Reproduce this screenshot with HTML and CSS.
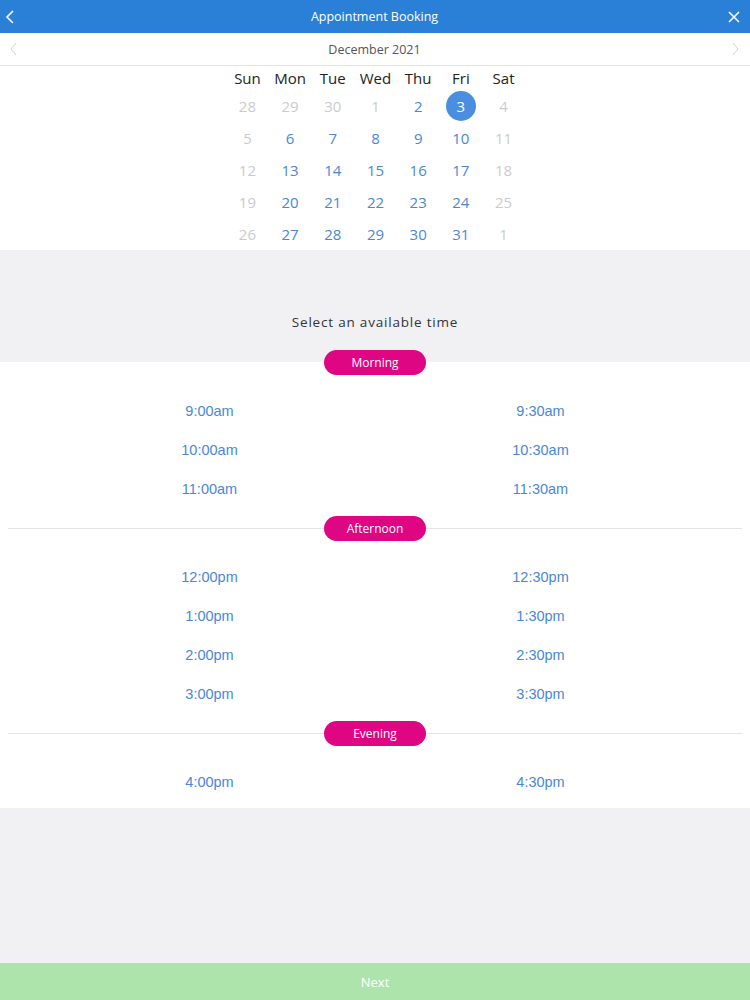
FILE: index.html
```html
<!DOCTYPE html>
<html lang="en">
<head>
    <meta charset="UTF-8">
    <meta name="viewport" content="width=device-width, initial-scale=1.0">
    <title>Appointment Booking</title>
    <link rel="stylesheet" href="styles.css">
</head>
<body>
    <!-- Top bar -->
    <header class="topbar">
        <svg class="topbar-icon" width="12" height="16" viewBox="0 0 12 16">
            <path d="M9 2 L3 8 L9 14" fill="none" stroke="white" stroke-width="1.6"/>
        </svg>
        <div class="topbar-title">Appointment Booking</div>
        <svg class="topbar-icon close" width="14" height="14" viewBox="0 0 14 14">
            <path d="M2 2 L12 12 M12 2 L2 12" fill="none" stroke="white" stroke-width="1.6"/>
        </svg>
    </header>

    <!-- Month switcher -->
    <div class="monthbar">
        <svg width="10" height="14" viewBox="0 0 10 14">
            <path d="M7 1 L2 7 L7 13" fill="none" stroke="#d4d4d8" stroke-width="1"/>
        </svg>
        <div class="month-title">December 2021</div>
        <svg width="10" height="14" viewBox="0 0 10 14">
            <path d="M3 1 L8 7 L3 13" fill="none" stroke="#d4d4d8" stroke-width="1"/>
        </svg>
    </div>

    <!-- Calendar grid -->
    <div class="calendar">
        <div class="cal-grid">
            <div class="weekday">Sun</div>
            <div class="weekday">Mon</div>
            <div class="weekday">Tue</div>
            <div class="weekday">Wed</div>
            <div class="weekday">Thu</div>
            <div class="weekday">Fri</div>
            <div class="weekday">Sat</div>

            <div class="day off">28</div>
            <div class="day off">29</div>
            <div class="day off">30</div>
            <div class="day off">1</div>
            <div class="day">2</div>
            <div class="day"><span class="selected">3</span></div>
            <div class="day off">4</div>

            <div class="day off">5</div>
            <div class="day">6</div>
            <div class="day">7</div>
            <div class="day">8</div>
            <div class="day">9</div>
            <div class="day">10</div>
            <div class="day off">11</div>

            <div class="day off">12</div>
            <div class="day">13</div>
            <div class="day">14</div>
            <div class="day">15</div>
            <div class="day">16</div>
            <div class="day">17</div>
            <div class="day off">18</div>

            <div class="day off">19</div>
            <div class="day">20</div>
            <div class="day">21</div>
            <div class="day">22</div>
            <div class="day">23</div>
            <div class="day">24</div>
            <div class="day off">25</div>

            <div class="day off">26</div>
            <div class="day">27</div>
            <div class="day">28</div>
            <div class="day">29</div>
            <div class="day">30</div>
            <div class="day">31</div>
            <div class="day off">1</div>
        </div>
    </div>

    <div class="time-heading">Select an available time</div>

    <!-- Time slots -->
    <div class="slots">
        <div class="slot-group">
            <div class="divider first">
                <span class="pill">Morning</span>
            </div>
            <div class="slot-grid">
                <div class="slot">9:00am</div>
                <div class="slot">9:30am</div>
                <div class="slot">10:00am</div>
                <div class="slot">10:30am</div>
                <div class="slot">11:00am</div>
                <div class="slot">11:30am</div>
            </div>
        </div>

        <div class="slot-group">
            <div class="divider">
                <span class="line"></span>
                <span class="pill">Afternoon</span>
                <span class="line"></span>
            </div>
            <div class="slot-grid">
                <div class="slot">12:00pm</div>
                <div class="slot">12:30pm</div>
                <div class="slot">1:00pm</div>
                <div class="slot">1:30pm</div>
                <div class="slot">2:00pm</div>
                <div class="slot">2:30pm</div>
                <div class="slot">3:00pm</div>
                <div class="slot">3:30pm</div>
            </div>
        </div>

        <div class="slot-group last">
            <div class="divider">
                <span class="line"></span>
                <span class="pill">Evening</span>
                <span class="line"></span>
            </div>
            <div class="slot-grid">
                <div class="slot">4:00pm</div>
                <div class="slot">4:30pm</div>
            </div>
        </div>
    </div>

    <div class="spacer"></div>

    <div class="next-btn">Next</div>
</body>
</html>
```

FILE: styles.css
```css
html, body {
    margin: 0;
    padding: 0;
    height: 100%;
}

body {
    display: flex;
    flex-direction: column;
    background-color: #f1f1f3;
    font-family: "Open Sans", "Noto Sans", sans-serif;
    overflow: hidden;
}

/* top bar */
.topbar {
    height: 33px;
    flex-shrink: 0;
    background-color: #2a7fd6;
    display: grid;
    grid-template-columns: 1fr auto 1fr;
    align-items: center;
    padding: 0 9px 0 4px;
}

.topbar-title {
    color: white;
    font-size: 12.5px;
    margin-left: 4px;
}

.topbar-icon {
    display: block;
}

.topbar-icon.close {
    justify-self: end;
}

/* month */
.monthbar {
    height: 32px;
    flex-shrink: 0;
    background-color: white;
    border-bottom: 1px solid #e2e2e6;
    display: flex;
    align-items: center;
    justify-content: space-between;
    padding: 0 10px 0 9px;
}

.month-title {
    color: #555;
    font-size: 12.5px;
}

/* calendar */
.calendar {
    background-color: white;
    height: 184px;
    flex-shrink: 0;
    display: flex;
    justify-content: center;
}

.cal-grid {
    display: grid;
    grid-template-columns: repeat(7, 42.7px);
    grid-template-rows: 24px repeat(5, 32px);
    margin-left: 1px;
}

.weekday {
    text-align: center;
    font-size: 15px;
    color: #222;
    line-height: 24px;
}

.day {
    display: flex;
    align-items: center;
    justify-content: center;
    font-size: 15px;
    color: #4a87d9;
}

.day.off {
    color: #cbcbcf;
}

.selected {
    width: 30px;
    height: 30px;
    border-radius: 50%;
    background-color: #4a8ee0;
    color: white;
    display: flex;
    align-items: center;
    justify-content: center;
}

/* time heading */
.time-heading {
    flex-shrink: 0;
    height: 112px;
    box-sizing: border-box;
    padding-top: 62px;
    text-align: center;
    font-size: 13.5px;
    letter-spacing: 0.8px;
    line-height: 20px;
    color: #333;
}

/* slots */
.slots {
    flex-shrink: 0;
    background-color: white;
    display: flex;
    flex-direction: column;
    padding-bottom: 6px;
}

.slot-group {
    display: flex;
    flex-direction: column;
    padding-bottom: 7px;
}

.slot-group.last {
    padding-bottom: 0;
}

.divider {
    height: 25px;
    display: flex;
    align-items: center;
    justify-content: center;
    padding: 0 8px;
    margin-bottom: 17px;
}

.divider.first {
    margin-top: -12.5px;
}

.line {
    flex: 1;
    height: 1px;
    background-color: #e4e4e8;
}

.pill {
    width: 102px;
    height: 25px;
    border-radius: 13px;
    background-color: #de0682;
    color: white;
    font-size: 12px;
    display: flex;
    align-items: center;
    justify-content: center;
}

.slot-grid {
    display: grid;
    grid-template-columns: 1fr 1fr;
    grid-auto-rows: 39px;
    padding: 0 44px;
}

.slot {
    display: flex;
    align-items: center;
    justify-content: center;
    font-family: "Liberation Sans", Arial, sans-serif;
    font-size: 14.5px;
    color: #4a87d9;
}

.spacer {
    flex: 1;
}

.next-btn {
    height: 37px;
    flex-shrink: 0;
    background-color: #ade4ab;
    color: white;
    font-size: 13px;
    display: flex;
    align-items: center;
    justify-content: center;
}
```
